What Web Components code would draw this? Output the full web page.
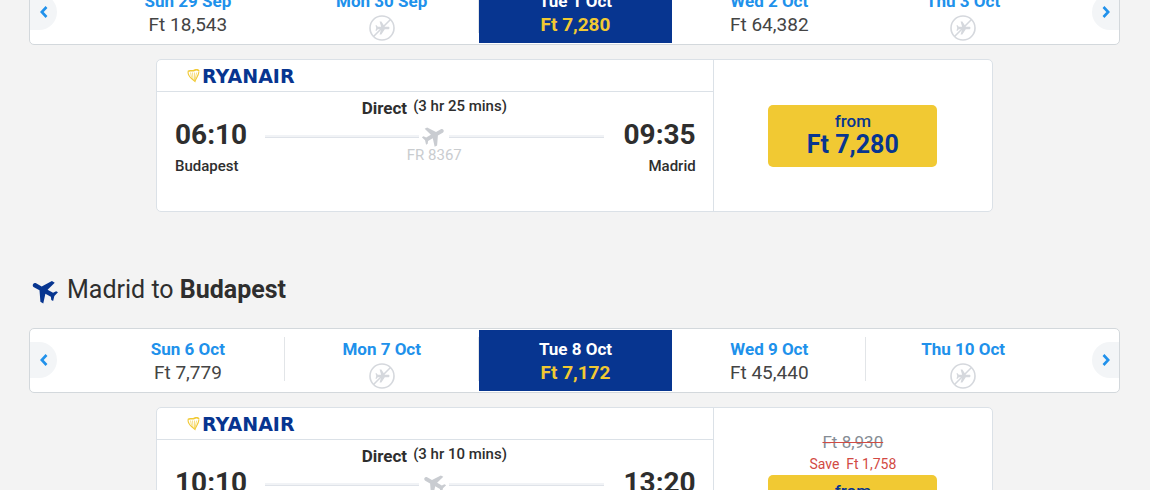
<!DOCTYPE html>
<html lang="en">
<head>
<meta charset="utf-8">
<title>Flights Budapest – Madrid</title>
<style>
html { height: 100%; overflow: hidden; background: #f3f3f3; }
body { margin: 0; height: 100%; overflow: hidden; font-family: Roboto, "Liberation Sans", sans-serif; color: #2e2e2e; }
main { display: block; margin-top: -20px; padding: 0 30px 0 29px; }
</style>
</head>
<body>
<main>
  <date-carousel>
    <date-cell date="Sun 29 Sep">Ft 18,543</date-cell>
    <date-cell date="Mon 30 Sep" unavailable divided></date-cell>
    <date-cell date="Tue 1 Oct" selected>Ft 7,280</date-cell>
    <date-cell date="Wed 2 Oct">Ft 64,382</date-cell>
    <date-cell date="Thu 3 Oct" unavailable></date-cell>
  </date-carousel>
  <flight-card>
    <span slot="duration">(3 hr 25 mins)</span>
    <span slot="depart">06:10</span><span slot="origin">Budapest</span>
    <span slot="number">FR 8367</span>
    <span slot="arrive">09:35</span><span slot="destination">Madrid</span>
    <span slot="price">Ft 7,280</span>
  </flight-card>
  <route-heading>Madrid to <b>Budapest</b></route-heading>
  <date-carousel>
    <date-cell date="Sun 6 Oct" divided>Ft 7,779</date-cell>
    <date-cell date="Mon 7 Oct" unavailable divided></date-cell>
    <date-cell date="Tue 8 Oct" selected>Ft 7,172</date-cell>
    <date-cell date="Wed 9 Oct" divided>Ft 45,440</date-cell>
    <date-cell date="Thu 10 Oct" unavailable></date-cell>
  </date-carousel>
  <flight-card inbound>
    <span slot="duration">(3 hr 10 mins)</span>
    <span slot="depart">10:10</span>
    <span slot="arrive">13:20</span>
    <s slot="old">Ft 8,930</s><span slot="save">Save&nbsp; Ft 1,758</span>
  </flight-card>
</main>
<script>
const PLANE = 'M21 16.3v-2.6L13.3 8.6V3.5c0-1-.8-1.8-1.8-1.8S9.7 2.5 9.7 3.5v5.1L2 13.7v2.6l7.7-2.3V19l-2.2 1.6V22.3l4-1.1 4 1.1V20.6L13.3 19v-5z';

function define(name, html, setup) {
  const template = document.createElement('template');
  template.innerHTML = html;
  customElements.define(name, class extends HTMLElement {
    constructor() {
      super();
      this.attachShadow({ mode: 'open' }).append(template.content.cloneNode(true));
    }
    connectedCallback() { if (setup) setup(this, this.shadowRoot); }
  });
}

define('plane-icon', `
<style>
:host { display: block; width: 26px; height: 26px; }
:host([mirrored]) { transform: scaleX(-1); }
svg { display: block; width: 100%; height: 100%; }
</style>
<svg viewBox="0 0 24 24" aria-hidden="true"><path transform="rotate(61 12 12)" fill="currentColor" d="${PLANE}"/></svg>`);

define('no-flight-icon', `
<style>
:host { display: block; width: 26px; height: 26px; color: #d5d8dd; }
svg { display: block; }
</style>
<svg width="26" height="26" viewBox="0 0 26 26" role="img" aria-label="No flights">
  <circle cx="13" cy="13" r="12" fill="none" stroke="currentColor" stroke-width="1.6"/>
  <path d="M4.5 21.5l17-17" stroke="currentColor" stroke-width="1.6"/>
  <g transform="translate(13.5 13) rotate(90) scale(.68) translate(-11.5 -12)"><path fill="currentColor" d="${PLANE}"/></g>
</svg>`);

define('airline-logo', `
<style>
:host { display: flex; align-items: center; gap: 2px; color: #073590; font: 700 19px/20px "DejaVu Sans", sans-serif; }
svg { display: block; }
</style>
<svg width="13" height="14" viewBox="0 0 13 14" fill="none" stroke="#f1c933" aria-hidden="true">
  <path d="M1 2.5C3 .6 5 2.600 7 1.500s4-.8 5 .5" stroke-width="1.600"/>
  <path d="M1 2.500c0 3 1 5 3.500 7L8 12.500c.5-3 3.500-5 4-10" stroke-width="1.100"/>
  <path d="M3.500 3.500l1 5M5.500 3.500l.5 7M7.500 3.500v8M9.700 3.500l-1.700 7" stroke-width=".6"/>
</svg>
<span>RYANAIR</span>`);

define('date-cell', `
<style>
:host { display: block; }
:host([divided]) { background: linear-gradient(#e2e5e8, #e2e5e8) right 7px / 1px 44px no-repeat; }
button { box-sizing: border-box; display: flex; flex-direction: column; align-items: center; width: 100%; height: 100%; margin: 0; padding: 7px 0 0; border: 0; background: none; font: inherit; cursor: pointer; }
.date { font-size: 17px; font-weight: 700; line-height: 24px; color: #2091eb; }
.price { font-size: 19px; line-height: 24px; color: #444; }
no-flight-icon { display: none; margin-top: 2px; }
:host([unavailable]) .price { display: none; }
:host([unavailable]) no-flight-icon { display: block; }
:host([selected]) button { background: #073590; }
:host([selected]) .date { color: #fff; }
:host([selected]) .price { color: #f1c933; font-weight: 700; }
</style>
<button type="button"><span class="date"></span><span class="price"><slot></slot></span><no-flight-icon></no-flight-icon></button>`,
(el, root) => { root.querySelector('.date').textContent = el.getAttribute('date'); });

define('date-carousel', `
<style>
:host { box-sizing: border-box; display: grid; grid-template-columns: 61px minmax(0, 1fr) 59px; height: 65px; padding: 1px 0; border: 1px solid #d3d8dc; border-radius: 5px; background: #fff; }
.days { display: grid; grid-template-columns: repeat(5, minmax(0, 1fr)); }
.arrow { display: grid; place-items: center; width: 27px; height: 36px; margin: 12px 0 0; padding: 0; border: 0; background: #f3f5f7; color: #2091eb; cursor: pointer; }
.previous { border-radius: 0 18px 18px 0; }
.next { justify-self: end; border-radius: 18px 0 0 18px; }
svg { display: block; fill: none; stroke: currentColor; stroke-width: 2.6; }
</style>
<button class="arrow previous" type="button" aria-label="Previous days"><svg width="8" height="12" viewBox="0 0 8 12"><path d="M6.5 1L1.8 6l4.7 5"/></svg></button>
<div class="days"><slot></slot></div>
<button class="arrow next" type="button" aria-label="Next days"><svg width="8" height="12" viewBox="0 0 8 12"><path d="M1.5 1l4.7 5-4.7 5"/></svg></button>`);

define('route-heading', `
<style>
:host { display: block; padding: 62px 0 22px; }
h2 { display: flex; align-items: center; gap: 8px; margin: 0; font-size: 25px; font-weight: 400; line-height: 32px; }
plane-icon { width: 30px; height: 30px; padding-top: 2px; color: #073590; }
</style>
<h2><plane-icon mirrored></plane-icon><span><slot></slot></span></h2>`);

define('flight-card', `
<style>
:host { box-sizing: border-box; display: grid; grid-template-columns: minmax(0, 2fr) minmax(0, 1fr); min-height: 153px; margin: 14px 127px 0; border: 1px solid #dbe1e7; border-radius: 5px; background: #fff; }
.flight { border-right: 1px solid #dbe1e7; }
header { display: flex; align-items: center; height: 31px; padding-left: 30px; border-bottom: 1px solid #dbe1e7; }
.trip { display: grid; grid-template-columns: 90px minmax(0, 1fr) 92px; padding: 4px 17px 0 18px; }
.stop { display: flex; flex-direction: column; padding-top: 21px; }
.stop.end { align-items: flex-end; }
.time { font-size: 28px; font-weight: 700; line-height: 36px; }
.city { margin-top: 3px; font-size: 15px; font-weight: 500; line-height: 20px; }
.path { display: flex; flex-direction: column; align-items: center; }
.kind { display: flex; gap: 6px; font-size: 17px; font-weight: 700; line-height: 24px; }
.duration { font-size: 15px; font-weight: 500; line-height: 20px; }
.line { display: flex; align-items: center; gap: 2px; width: 100%; margin-top: 3px; color: #c9ccd1; }
.line::before, .line::after { content: ""; flex: 1; height: 2px; border-bottom: 1px solid #dfe3e9; background: #f1f3f6; }
.number { margin-top: -4px; font-size: 15px; line-height: 20px; color: #c9cccf; }
.fare { display: flex; flex-direction: column; align-items: center; justify-content: center; }
.old { font-size: 17px; line-height: 22px; color: #858c94; }
.save { font-size: 14px; line-height: 22px; color: #d24a43; }
::slotted(s) { text-decoration-color: #d24a43; }
.buy { display: flex; flex-direction: column; align-items: center; box-sizing: border-box; width: 169px; height: 62px; margin: 0; padding: 5px 0 0; border: 0; border-radius: 5px; background: #f1c933; color: #073590; font: 500 17px/22px Roboto, sans-serif; cursor: pointer; }
.amount { font-size: 25px; font-weight: 700; line-height: 26px; }
[hidden] { display: none; }
</style>
<section class="flight">
  <header><airline-logo></airline-logo></header>
  <div class="trip">
    <div class="stop"><span class="time"><slot name="depart"></slot></span><span class="city"><slot name="origin"></slot></span></div>
    <div class="path">
      <div class="kind"><span>Direct</span><span class="duration"><slot name="duration"></slot></span></div>
      <div class="line"><plane-icon></plane-icon></div>
      <span class="number"><slot name="number"></slot></span>
    </div>
    <div class="stop end"><span class="time"><slot name="arrive"></slot></span><span class="city"><slot name="destination"></slot></span></div>
  </div>
</section>
<section class="fare">
  <span class="old"><slot name="old"></slot></span>
  <span class="save"><slot name="save"></slot></span>
  <button class="buy" type="button"><span>from</span><span class="amount"><slot name="price"></slot></span></button>
</section>`,
(el, root) => {
  root.querySelector('plane-icon').toggleAttribute('mirrored', el.hasAttribute('inbound'));
  for (const name of ['old', 'save']) {
    root.querySelector('.' + name).hidden = !el.querySelector('[slot=' + name + ']');
  }
});
</script>
</body>
</html>
